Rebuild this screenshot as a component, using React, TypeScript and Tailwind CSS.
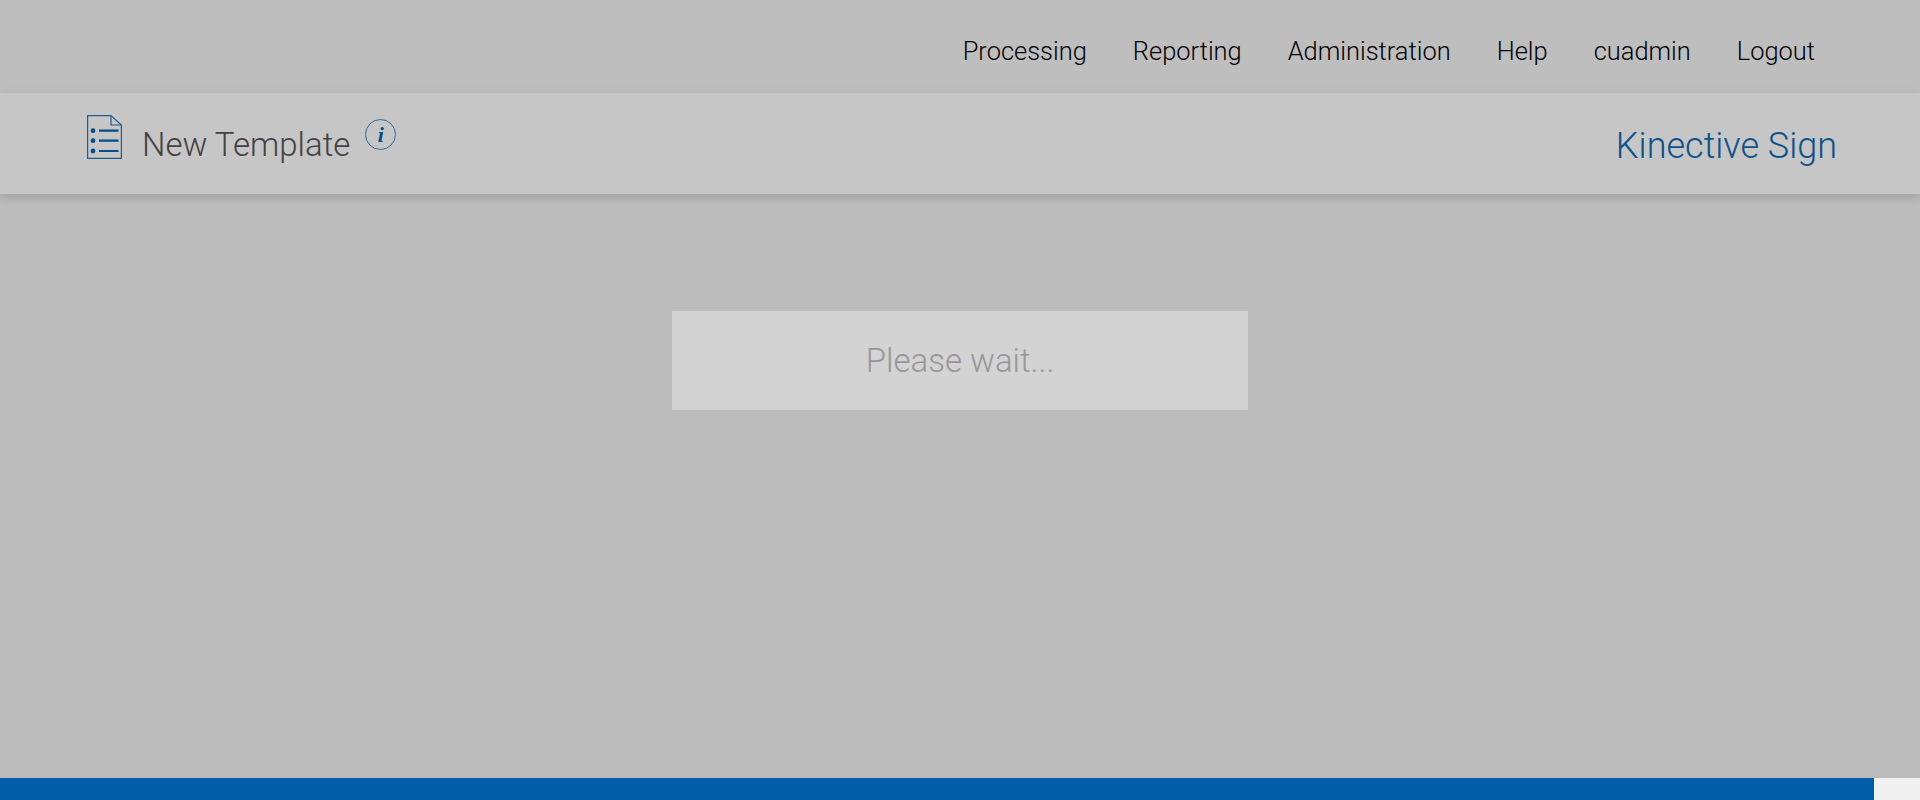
const navItems = ["Processing", "Reporting", "Administration", "Help", "cuadmin", "Logout"];

function TemplateIcon() {
  return (
    <svg width="35" height="44" viewBox="0 0 35 44" fill="none" className="mb-[14px] shrink-0">
      <path d="M0.6 0.6H24L34.4 10V43.4H0.6V0.6Z" stroke="#1c5d8f" strokeWidth="1.2" />
      <path d="M24 0.6V10H34.4" stroke="#1c5d8f" strokeWidth="1.2" />
      <circle cx="6" cy="15.7" r="2.4" fill="#004e8c" />
      <circle cx="6" cy="25.7" r="2.4" fill="#004e8c" />
      <circle cx="6" cy="36" r="2.4" fill="#004e8c" />
      <path d="M12 15.7H31.5M12 25.7H31.5M12 36H31.5" stroke="#004e8c" strokeWidth="2.2" />
    </svg>
  );
}

export default function App() {
  return (
    <div className="flex h-screen flex-col overflow-hidden bg-[#bbbbbb] font-['Roboto',sans-serif] font-light">
      <nav className="flex h-[93px] shrink-0 items-center justify-end gap-[46px] bg-[#bebebe] pr-[105px] pt-[10px] text-[25.45px] text-black">
        {navItems.map((item) => (
          <a key={item} href="#">
            {item}
          </a>
        ))}
      </nav>

      <header className="flex h-[101px] shrink-0 items-center justify-between bg-[#c6c6c6] pl-[87px] pr-[83px] shadow-[0_3px_10px_rgba(0,0,0,0.15)]">
        <div className="flex items-center">
          <TemplateIcon />
          <h1 className="ml-[20px] mt-[2px] text-[33px] text-[#424242]">New Template</h1>
          <span className="mb-[18px] ml-[15px] flex h-[31px] w-[31px] items-center justify-center rounded-full border border-[#2f6a98] font-['Liberation_Serif',serif] text-[22px] font-bold italic text-[#004e8c]">
            i
          </span>
        </div>
        <span className="mt-[4px] text-[36px] text-[#0c5289]">Kinective Sign</span>
      </header>

      <main className="flex flex-1 justify-center pt-[117px]">
        <div className="flex h-[99px] w-[576px] items-center justify-center bg-[#d3d3d3] text-[33px] text-[#979797]">
          Please wait...
        </div>
      </main>

      <footer className="flex h-[22px] shrink-0">
        <div className="flex-1 bg-[#005ea8]" />
        <div className="w-[46px] bg-[#f0f0f0]" />
      </footer>
    </div>
  );
}
